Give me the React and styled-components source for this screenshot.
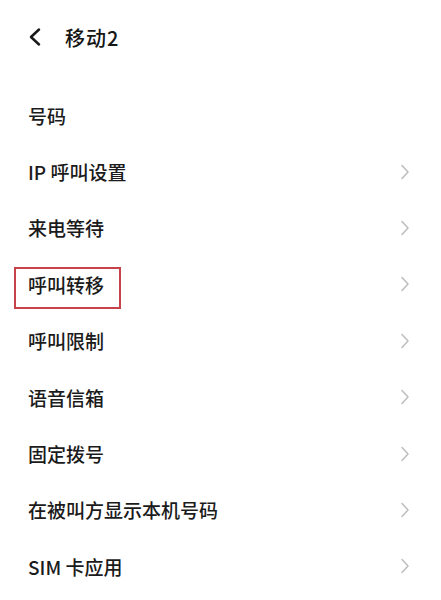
import React from "react";
import styled, { createGlobalStyle } from "styled-components";

const GlobalStyle = createGlobalStyle`
  html, body {
    margin: 0;
    padding: 0;
    background: #ffffff;
  }
  body {
    font-family: "Noto Sans CJK SC", "Noto Sans", sans-serif;
    color: #1b1b1b;
  }
`;

const items = [
  { label: "号码", arrow: false },
  { label: "IP 呼叫设置", arrow: true },
  { label: "来电等待", arrow: true },
  { label: "呼叫转移", arrow: true, marked: true },
  { label: "呼叫限制", arrow: true },
  { label: "语音信箱", arrow: true },
  { label: "固定拨号", arrow: true },
  { label: "在被叫方显示本机号码", arrow: true },
  { label: "SIM 卡应用", arrow: true },
];

const Page = styled.div`
  width: 441px;
  height: 600px;
  overflow: hidden;
  background: #fff;
`;

const Header = styled.div`
  height: 74px;
  display: flex;
  align-items: center;
  padding-left: 27px;
  gap: 22px;
`;

const Title = styled.h1`
  margin: 0;
  font-size: 20px;
  font-weight: 500;
  color: #161616;
  letter-spacing: 1px;
`;

const List = styled.div`
  padding-top: 13px;
`;

const Row = styled.div`
  position: relative;
  height: 56.4px;
  display: flex;
  align-items: center;
  justify-content: space-between;
  padding: 0 31px 0 28px;
`;

const Label = styled.span`
  font-size: 19px;
  font-weight: 500;
  color: #1b1b1b;
`;

const Mark = styled.div`
  position: absolute;
  left: 14px;
  top: 11px;
  width: 103px;
  height: 38px;
  border: 2px solid #c6434b;
`;

const BackIcon = () => (
  <svg width="16" height="20" viewBox="0 0 16 20">
    <path
      d="M12 2.5 L4 10 L12 17.5"
      fill="none"
      stroke="#1a1a1a"
      strokeWidth="2.5"
      strokeLinecap="round"
      strokeLinejoin="round"
    />
  </svg>
);

const Chevron = () => (
  <svg width="10" height="16" viewBox="0 0 10 16">
    <path
      d="M2 1.5 L8 8 L2 14.5"
      fill="none"
      stroke="#bdbdbd"
      strokeWidth="1.5"
      strokeLinecap="round"
      strokeLinejoin="round"
    />
  </svg>
);

export default function App() {
  return (
    <Page>
      <GlobalStyle />
      <Header>
        <BackIcon />
        <Title>移动2</Title>
      </Header>
      <List>
        {items.map((item) => (
          <Row key={item.label}>
            {item.marked && <Mark />}
            <Label>{item.label}</Label>
            {item.arrow && <Chevron />}
          </Row>
        ))}
      </List>
    </Page>
  );
}
